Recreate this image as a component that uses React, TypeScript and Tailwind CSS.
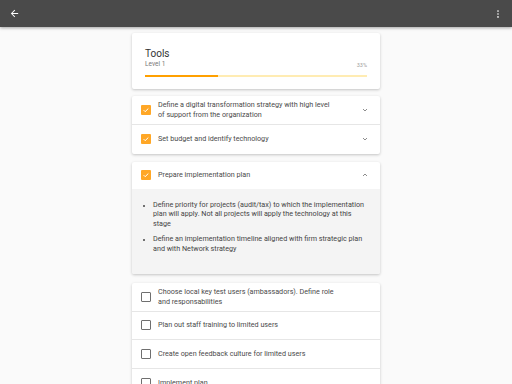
import React from "react";

const font = { fontFamily: "Roboto, 'Liberation Sans', sans-serif" };

function Check({ checked }: { checked: boolean }) {
  if (checked) {
    return (
      <div className="w-[10px] h-[10px] rounded-[1px] bg-[#ffa726] flex items-center justify-center shrink-0">
        <svg width="8" height="8" viewBox="0 0 24 24">
          <path d="M5 12.5l4.5 4.5L19 7.5" fill="none" stroke="#fff" strokeWidth="3" />
        </svg>
      </div>
    );
  }
  return <div className="w-[10px] h-[10px] rounded-[1px] border-[1.5px] border-[#6f6f6f] shrink-0" />;
}

function Chevron({ up }: { up?: boolean }) {
  return (
    <svg width="8" height="8" viewBox="0 0 24 24" className="shrink-0">
      <path d={up ? "M6 15l6-6 6 6" : "M6 9l6 6 6-6"} fill="none" stroke="#757575" strokeWidth="2.5" />
    </svg>
  );
}

function Row({ text, checked, chevron, up, last }: { text: React.ReactNode; checked: boolean; chevron?: boolean; up?: boolean; last?: boolean }) {
  return (
    <div className={`flex items-center pl-[9px] pr-[11px] min-h-[28.5px] py-[4px] ${last ? "" : "border-b border-[#e6e6e6]"}`}>
      <Check checked={checked} />
      <div className="ml-[7px] flex-1 text-[7.2px] leading-[10px] text-[#4a4a4a]">{text}</div>
      {chevron && <Chevron up={up} />}
    </div>
  );
}

export default function App() {
  const cards = "bg-white rounded-[2px] shadow-[0_1px_3px_rgba(0,0,0,0.22)]";
  return (
    <div className="w-[512px] h-[384px] overflow-hidden bg-[#fafafa]" style={font}>
      <div className="h-[27px] bg-[#4a4a4a] shadow-[0_1px_3px_rgba(0,0,0,0.35)] flex items-center justify-between pl-[9px] pr-[9px] relative z-10">
        <svg width="11" height="11" viewBox="0 0 24 24">
          <path d="M20 11H7.83l5.59-5.59L12 4l-8 8 8 8 1.41-1.41L7.83 13H20v-2z" fill="#fff" />
        </svg>
        <svg width="10" height="10" viewBox="0 0 24 24">
          <circle cx="12" cy="5" r="2" fill="#fff" />
          <circle cx="12" cy="12" r="2" fill="#fff" />
          <circle cx="12" cy="19" r="2" fill="#fff" />
        </svg>
      </div>

      <div className="w-[248px] mx-auto pt-[6px] flex flex-col">
        <div className={`${cards} h-[56px] px-[13px] pt-[14px]`}>
          <div className="text-[10px] leading-[13px] text-[#333]">Tools</div>
          <div className="flex justify-between items-end">
            <div className="text-[6.5px] leading-[9px] text-[#777]">Level 1</div>
            <div className="text-[5.5px] leading-[8px] text-[#9e9e9e]">33%</div>
          </div>
          <div className="mt-[6px] h-[2px] bg-[#ffecb3] flex">
            <div className="h-full bg-[#ffa000]" style={{ width: "33%" }} />
          </div>
        </div>

        <div className={`${cards} mt-[7px]`}>
          <Row
            checked
            chevron
            text={<>Define a digital transformation strategy with high level<br />of support from the organization</>}
          />
          <Row checked chevron last text="Set budget and identify technology" />
        </div>

        <div className={`${cards} mt-[8px] overflow-hidden`}>
          <div className="flex items-center pl-[9px] pr-[11px] h-[27px]">
            <Check checked />
            <div className="ml-[7px] flex-1 text-[7.2px] leading-[10px] text-[#4a4a4a]">Prepare implementation plan</div>
            <Chevron up />
          </div>
          <div className="bg-[#f4f4f4] h-[85px] pl-[13px] pr-[10px] pt-[11px]">
            <ul className="list-disc pl-[8px] text-[7.2px] leading-[9.5px] text-[#444] marker:text-[5px] whitespace-nowrap">
              <li>
                Define priority for projects (audit/tax) to which the implementation<br />
                plan will apply. Not all projects will apply the technology at this<br />
                stage
              </li>
              <li className="mt-[6px]">
                Define an implementation timeline aligned with firm strategic plan<br />
                and with Network strategy
              </li>
            </ul>
          </div>
        </div>

        <div className={`${cards} mt-[9px]`}>
          <Row checked={false} text={<>Choose local key test users (ambassadors). Define role<br />and responsabilities</>} />
          <Row checked={false} text="Plan out staff training to limited users" />
          <Row checked={false} text="Create open feedback culture for limited users" />
          <Row checked={false} last text="Implement plan" />
        </div>
      </div>
    </div>
  );
}
